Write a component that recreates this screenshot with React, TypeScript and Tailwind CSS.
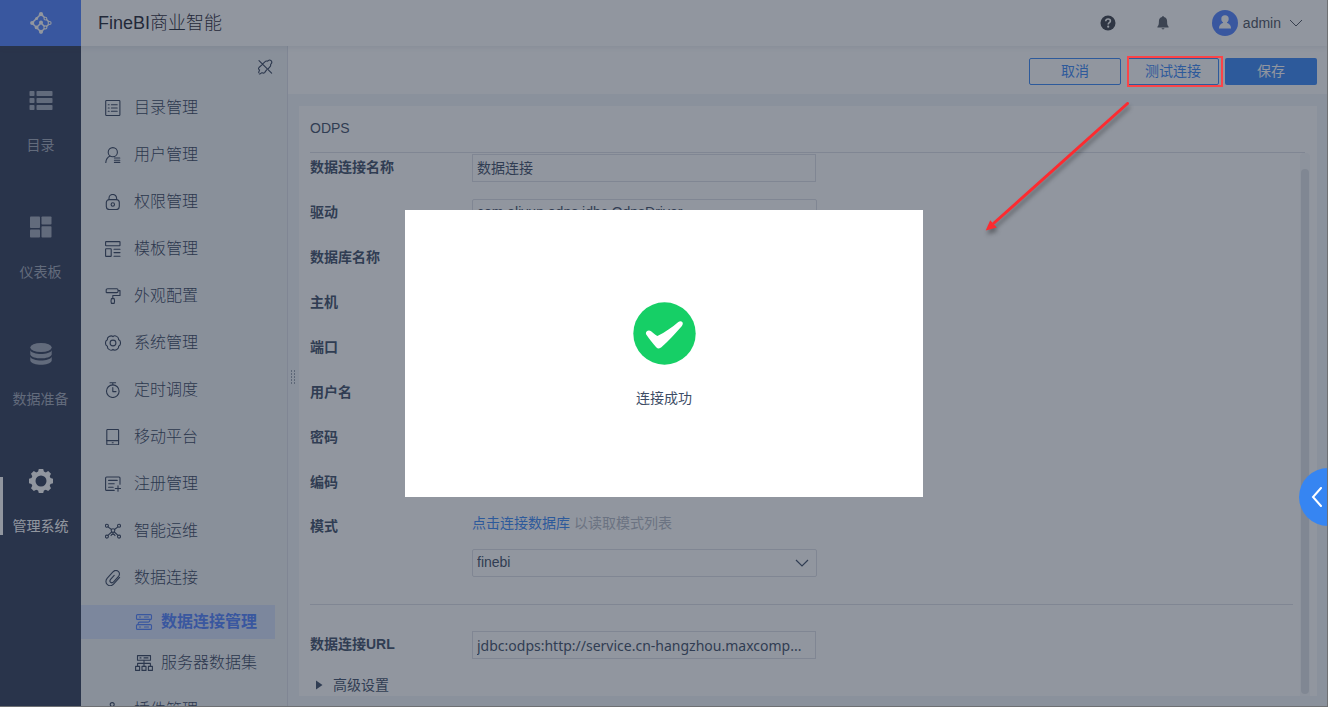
import type { ReactNode } from 'react';

const line = {
  viewBox: '0 0 16 16',
  fill: 'none',
  stroke: 'currentColor',
  strokeWidth: 1.1,
  strokeLinecap: 'round' as const,
  strokeLinejoin: 'round' as const,
  className: 'w-4 h-4 shrink-0',
  'aria-hidden': true,
};

const icons: Record<string, ReactNode> = {
  catalog: (
    <svg {...line}>
      <rect x="0.7" y="0.5" width="14.2" height="15" rx="0.8" />
      <path d="M3.2 4.7h1M6.4 4.7h5.8M3.2 8h1M6.4 8h5.8M3.2 11.3h1M6.4 11.3h5.8" />
    </svg>
  ),
  user: (
    <svg {...line}>
      <circle cx="7.8" cy="5.2" r="4.6" />
      <path d="M5 9C2.5 10.2 1 12.4.8 15.6M9.4 11h5.4M9.4 13.2h5.4M9.4 15.4h5.4" />
    </svg>
  ),
  lock: (
    <svg {...line}>
      <rect x="1.3" y="5.6" width="13" height="10" rx="3" />
      <path d="M4 5.4V4.2a3.8 3.8 0 0 1 7.6 0v1.2" />
      <circle cx="7.8" cy="10.5" r="1.7" />
    </svg>
  ),
  template: (
    <svg {...line}>
      <rect x="0.6" y="0.6" width="14.4" height="4.2" rx="0.5" />
      <rect x="0.6" y="7.8" width="5.6" height="7.6" rx="0.5" />
      <path d="M9 8.2h6M9 11.6h6M9 15.2h6" />
    </svg>
  ),
  roller: (
    <svg {...line}>
      <path d="M2.6.8h9.2c.8 0 1.2.5 1.2 1.2v1.4c0 .7-.4 1.2-1.2 1.2H2.6c-.8 0-1.4.3-1.4-1M1.2 4.2V2c0-.7.5-1.2 1.4-1.2M13 2.6h2v4.9H7.8v3" />
      <path d="M6.4 10.6h2.8c.5 1.5.5 3.2 0 4.8H6.4c-.5-1.6-.5-3.3 0-4.8Z" />
    </svg>
  ),
  setting: (
    <svg {...line}>
      <path d="M8 1.6C9.8-.5 14.2 2 13.5 4.8C16.200 5.300 16.200 10.500 13.500 11.200C14.400 13.900 10 16.300 8 14.400C6.200 16.500 1.800 14 2.500 11.200C-.2 10.700-.2 5.500 2.500 4.800C1.600 2.100 6-.3 8 1.6Z" />
      <circle cx="8" cy="8" r="2.9" />
    </svg>
  ),
  clock: (
    <svg {...line}>
      <circle cx="7.8" cy="9.2" r="6.3" />
      <path d="M5 .8h5.6M7.8.8v2M7.8 5.6v4h3.2" />
    </svg>
  ),
  mobile: (
    <svg {...line}>
      <rect x="1.8" y="0.5" width="11.8" height="15.2" rx="0.8" />
      <path d="M1.8 11.6h11.8M7.2 13.7h1" />
    </svg>
  ),
  register: (
    <svg {...line}>
      <path d="M15 8.3V2c0-.6-.4-1-1-1H1.6c-.6 0-1 .4-1 1v11.4c0 .6.4 1 1 1h7.6M3.6 4.4h8.6M3.6 7.8h5.6M3.6 11.2h4.6M13 9.8v5.4M10.3 12.5h5.4" />
    </svg>
  ),
  ops: (
    <svg {...line}>
      <circle cx="1.9" cy="2.8" r="1.5" />
      <circle cx="14" cy="2.8" r="1.5" />
      <circle cx="1.9" cy="13.6" r="1.5" />
      <circle cx="14" cy="13.6" r="1.5" />
      <circle cx="8" cy="7.6" r="1.8" />
      <path d="M3 3.9 6.5 6.5M12.9 3.9 9.5 6.5M2.9 12.4 6.7 9M13 12.4 9.3 9M8 9.6v1.6" />
      <path d="M6 12.6a2.1 2.1 0 0 1 4 0" />
    </svg>
  ),
  clip: (
    <svg {...line}>
      <path d="M14.6 7.3 9 13.6c-2 2.2-4.7 2.6-6.6 1-2-1.7-1.9-4.4-.1-6.5l5.4-6c1.6-1.8 4-2.1 5.6-.7s1.5 3.5 0 5.2l-4.7 5.3c-.9 1-2.1 1.1-3 .4-.9-.8-.8-2 0-3l3.6-4" />
    </svg>
  ),
  plugin: (
    <svg {...line}>
      <circle cx="7.2" cy="2.6" r="2" />
      <path d="M1 5h13v10H1z" />
    </svg>
  ),
};

const menu = [
  { icon: 'catalog', text: '目录管理' },
  { icon: 'user', text: '用户管理' },
  { icon: 'lock', text: '权限管理' },
  { icon: 'template', text: '模板管理' },
  { icon: 'roller', text: '外观配置' },
  { icon: 'setting', text: '系统管理' },
  { icon: 'clock', text: '定时调度' },
  { icon: 'mobile', text: '移动平台' },
  { icon: 'register', text: '注册管理' },
  { icon: 'ops', text: '智能运维' },
  { icon: 'clip', text: '数据连接' },
];

const mainNav = [
  {
    text: '目录',
    icon: (
      <svg viewBox="0 0 24 24" className="w-6 h-6" fill="currentColor" aria-hidden="true">
        <rect x="0.5" y="3" width="5" height="5" rx="0.8" />
        <rect x="7.5" y="3" width="16" height="5" rx="0.8" />
        <rect x="0.5" y="10" width="5" height="5" rx="0.8" />
        <rect x="7.5" y="10" width="16" height="5" rx="0.8" />
        <rect x="0.5" y="17" width="5" height="5" rx="0.8" />
        <rect x="7.5" y="17" width="16" height="5" rx="0.8" />
      </svg>
    ),
  },
  {
    text: '仪表板',
    icon: (
      <svg viewBox="0 0 24 24" className="w-6 h-6" fill="currentColor" aria-hidden="true">
        <rect x="1" y="1.5" width="10" height="11.5" rx="0.8" />
        <rect x="12.5" y="1.5" width="10" height="8" rx="0.8" />
        <rect x="1" y="14.5" width="10" height="8" rx="0.8" />
        <rect x="12.5" y="11.2" width="10" height="11.3" rx="0.8" />
      </svg>
    ),
  },
  {
    text: '数据准备',
    icon: (
      <svg viewBox="0 0 24 24" className="w-6 h-6" fill="currentColor" aria-hidden="true">
        <ellipse cx="12" cy="5.5" rx="10.7" ry="4.6" />
        <path d="M1.3 8.2c2 5 19.4 5 21.4 0v4.2c-2 5.2-19.4 5.2-21.4 0z" />
        <path d="M1.3 14.8c2 5 19.4 5 21.4 0v4c-2 5.4-19.4 5.4-21.4 0z" />
      </svg>
    ),
  },
  {
    text: '管理系统',
    active: true,
    icon: (
      <svg viewBox="0 0 24 24" className="w-6 h-6" fill="currentColor" fillRule="evenodd" aria-hidden="true">
        <path d="M9.8 0h4.4l.7 2.6 1.9.8L19.2 2 22 4.8l-1.3 2.4.8 1.9 2.5.7v4.4l-2.5.7-.8 1.9 1.3 2.4-2.8 2.8-2.4-1.3-1.9.8-.7 2.5H9.8l-.7-2.5-1.9-.8L4.8 22 2 19.2l1.3-2.4-.8-1.9L0 14.2V9.8l2.5-.7.8-1.9L2 4.8 4.8 2l2.4 1.4 1.9-.8zM12 6.5a5.5 5.5 0 1 0 0 11 5.5 5.5 0 0 0 0-11z" />
      </svg>
    ),
  },
];

const otherFields = [
  { id: 'database', label: '数据库名称', value: '' },
  { id: 'host', label: '主机', value: '' },
  { id: 'port', label: '端口', value: '' },
  { id: 'username', label: '用户名', value: '' },
  { id: 'password', label: '密码', value: '' },
  { id: 'charset', label: '编码', value: '' },
];

function Field({ id, label, value, wide }: { id: string; label: string; value: string; wide?: boolean }) {
  return (
    <div className="flex items-start">
      <label htmlFor={id} className="w-[162px] shrink-0 font-bold leading-[26px]">
        {label}
      </label>
      <input
        id={id}
        defaultValue={value}
        className={`h-7 border border-[#dcdfe6] px-1 pb-[2px] bg-transparent ${wide ? 'w-[345px] rounded-xs' : 'w-[344px]'}`}
      />
    </div>
  );
}

function Header() {
  return (
    <header className="relative z-10 flex h-[46px] shrink-0 bg-white shadow-[0_1px_6px_rgba(60,75,110,0.12)]">
      <a href="#home" aria-label="FineBI" className="flex w-[81px] items-center justify-center bg-[#4f80ff] text-white">
        <svg viewBox="0 0 22 22" className="w-[22px] h-[22px]" fill="none" stroke="currentColor" strokeWidth="1.5" aria-hidden="true">
          <path d="M11 2 2 11l9 9M11 2l9 9-4.5 4.5M11 20l4-4M6.5 15.5 11 11l4.5 4.5" />
          <g fill="currentColor" stroke="none">
            <circle cx="11" cy="2.2" r="2.1" />
            <circle cx="2.2" cy="11" r="2.1" />
            <circle cx="11" cy="19.8" r="2.1" />
            <circle cx="11" cy="10.5" r="2" />
            <circle cx="6.6" cy="6.6" r="1.5" />
            <circle cx="6.6" cy="15.4" r="1.9" />
          </g>
          <g fill="#4f80ff" strokeWidth="1.1">
            <circle cx="15.4" cy="6.6" r="1.4" />
            <circle cx="19.6" cy="11" r="1.5" />
            <circle cx="15.4" cy="15.4" r="1.5" />
          </g>
        </svg>
      </a>
      <div className="flex flex-1 items-center pl-[17px] pr-[25px]">
        <h1 className="flex-1 text-lg font-light text-[#1f2533]">FineBI商业智能</h1>
        <button aria-label="帮助" className="mr-10 text-[#3b3f48]">
          <svg viewBox="0 0 16 16" className="w-4 h-4" aria-hidden="true">
            <circle cx="8" cy="8" r="7.5" fill="currentColor" />
            <path d="M5.7 6.2c.1-1.4 1-2.2 2.4-2.2s2.3.8 2.3 2c0 1.7-2.2 1.7-2.2 3.4" fill="none" stroke="white" strokeWidth="1.6" />
            <circle cx="8.2" cy="11.7" r="1.1" fill="white" />
          </svg>
        </button>
        <button aria-label="消息" className="mr-[42px] text-[#555a65]">
          <svg viewBox="0 0 14 16" className="w-[14px] h-4" fill="currentColor" aria-hidden="true">
            <path d="M7 1c.6 0 .9.4.9.9 2.2.5 3.2 2.2 3.2 4.400 0 2.900.3 4.400 1.500 5.500v.6H1.400v-.6c1.200-1.100 1.500-2.600 1.500-5.500 0-2.200 1-3.900 3.200-4.400 0-.5.300-.9.900-.9z" />
            <path d="M5.5 13.3h3c-.2.7-.8 1.1-1.5 1.1s-1.3-.4-1.5-1.1z" />
          </svg>
        </button>
        <button className="flex items-center text-sm text-[#4a505c]">
          <svg viewBox="0 0 26 26" className="mr-[5px] w-[26px] h-[26px]" aria-hidden="true">
            <circle cx="13" cy="13" r="13" fill="#4f80ff" />
            <circle cx="13" cy="8.9" r="3.7" fill="white" />
            <path d="M7 18.5c0-3 1.5-4.7 3.8-5.5h4.4c2.3.8 3.8 2.5 3.8 5.5z" fill="white" />
            <path d="M11 11h4v4h-4z" fill="white" />
          </svg>
          admin
          <svg viewBox="0 0 14 8" className="ml-2 w-[14px] h-2" fill="none" stroke="currentColor" aria-hidden="true">
            <path d="M1 1l6 6 6-6" />
          </svg>
        </button>
      </div>
    </header>
  );
}

function MainNav() {
  return (
    <nav aria-label="主导航" className="flex w-[81px] shrink-0 flex-col bg-[#2f3a56] pt-[42px] text-sm">
      {mainNav.map((item) => (
        <a
          key={item.text}
          href="#nav"
          className={`relative flex h-[127px] shrink-0 flex-col items-center ${item.active ? 'text-white' : 'text-[#a1a8b8]'}`}
        >
          {item.active && <span className="absolute left-0 top-2 h-[58px] w-[3px] bg-white" />}
          {item.icon}
          <span className="mt-[23px] leading-5">{item.text}</span>
        </a>
      ))}
    </nav>
  );
}

function SideMenu() {
  return (
    <aside className="w-[207px] shrink-0 overflow-hidden border-r border-[#dcdfe8] bg-[#eff2f5] text-base font-light text-[#33415a]">
      <div className="flex h-[38px] items-center justify-end pr-[14px] pt-1">
        <button aria-label="取消固定">
          <svg {...line}>
            <path d="M2 1.6 14.6 14.2M6 4.600 8.700 2.200c1.500-.5 1.800.5 2.500-.6 1-.8 2-.7 2.900.1.900.9.900 2 .1 3-1.200.9-.2 1.200-.7 2.400L11.100 9.900M4.900 5.900 2 8.500c-.8.9-.6 1.800.6 2.400-.2 1-1.200 1.800-.8 2.900M9.600 10.900 7.600 13.600c-.9.900-1.600.8-2.600 0-.8.6-1.600 1.400-2.600 1.400" />
          </svg>
        </button>
      </div>
      <ul>
        {menu.map((item) => (
          <li key={item.text}>
            <a href="#menu" className="flex h-[47px] items-center gap-[13px] pl-6">
              {icons[item.icon]}
              {item.text}
            </a>
          </li>
        ))}
        <li className="pt-1">
          <a href="#connections" className="mr-3 flex h-[34px] items-center gap-2 bg-[#d5e0fa] pl-[54px] font-bold text-[#4f80ff]">
            <svg {...line} className="w-[18px] h-4 shrink-0" viewBox="0 0 18 16">
              <rect x="1.5" y="0.6" width="15" height="4.8" rx="1" />
              <rect x="1.5" y="10.6" width="15" height="4.8" rx="1" />
              <path d="M4.5 3h1M9.5 3h4M4.5 13h1M9.5 13h4M14.8 5.4v1.2c0 1-.5 1.5-1.5 1.5H4.7c-1 0-1.5.5-1.5 1.3v1.2" />
            </svg>
            数据连接管理
          </a>
        </li>
        <li>
          <a href="#datasets" className="flex h-[47px] items-center gap-2 pl-[54px]">
            <svg {...line} className="w-[18px] h-4 shrink-0" viewBox="0 0 18 16">
              <rect x="2.5" y="0.6" width="13" height="4.6" />
              <path d="M5 2.9h1M9 2.9h4M9 5.2v6M2.6 11.2V8.4h12.8v2.8" />
              <rect x="0.6" y="11.4" width="4" height="4" />
              <rect x="7" y="11.4" width="4" height="4" />
              <rect x="13.4" y="11.4" width="4" height="4" />
            </svg>
            服务器数据集
          </a>
        </li>
        <li>
          <a href="#plugins" className="flex h-[47px] items-center gap-[13px] pl-6">
            {icons.plugin}
            插件管理
          </a>
        </li>
      </ul>
    </aside>
  );
}

function ConnectionForm() {
  return (
    <form className="flex min-h-0 flex-1 flex-col overflow-hidden bg-white pl-[11px] text-sm text-[#3d4d66]">
      <h2 className="mr-3 h-[47px] shrink-0 border-b border-[#dcdfe6] leading-[45px]">ODPS</h2>
      <div className="flex min-h-0 flex-1">
        <div className="min-w-0 flex-1 pr-[7px] pt-px">
          <div className="flex flex-col gap-[17px]">
            <Field id="name" label="数据连接名称" value="数据连接" />
            <Field id="driver" label="驱动" value="com.aliyun.odps.jdbc.OdpsDriver" wide />
            {otherFields.map((f) => (
              <Field key={f.id} {...f} />
            ))}
            <div className="flex items-start">
              <label htmlFor="schema" className="w-[162px] shrink-0 font-bold leading-6">
                模式
              </label>
              <div>
                <p className="leading-[18px] text-[#b3b8c4]">
                  <a href="#connect" className="mr-1 text-[#3786f6]">点击连接数据库</a>
                  以读取模式列表
                </p>
                <div className="relative mt-[17px] w-[345px]">
                  <select id="schema" className="h-7 w-full appearance-none rounded-xs border border-[#dcdfe6] px-1 pb-[2px]">
                    <option>finebi</option>
                  </select>
                  <svg viewBox="0 0 14 8" className="pointer-events-none absolute right-2 top-[10px] w-[14px] h-2" fill="none" stroke="currentColor" strokeWidth="1.2" aria-hidden="true">
                    <path d="M1 1l6 6 6-6" />
                  </svg>
                </div>
              </div>
            </div>
          </div>
          <hr className="mb-[26px] mt-[27px] border-[#dcdfe6]" />
          <div className="flex items-start">
            <label htmlFor="url" className="w-[162px] shrink-0 font-bold leading-[26px]">
              数据连接URL
            </label>
            <input
              id="url"
              defaultValue="jdbc:odps:http://service.cn-hangzhou.maxcomp..."
              className="h-7 w-[344px] border border-[#dcdfe6] px-1 font-['Noto_Sans','Open_Sans',sans-serif]"
            />
          </div>
          <button type="button" className="mt-4 flex items-center gap-[10px] pl-[6px] leading-5">
            <svg viewBox="0 0 7 10" className="w-[7px] h-[10px]" fill="currentColor" aria-hidden="true">
              <path d="M0 .5 6.5 5 0 9.5z" />
            </svg>
            高级设置
          </button>
        </div>
        <div className="mr-[7px] w-[10px] rounded-t-sm bg-[#f7f8fa] px-px pb-[2px] pt-4">
          <div className="h-full rounded-full bg-[#dce1e6]" />
        </div>
      </div>
    </form>
  );
}

function SuccessDialog() {
  return (
    <div className="fixed inset-0 z-20 flex items-center justify-center bg-[rgba(35,46,64,0.5)]">
      <div
        role="dialog"
        aria-modal="true"
        aria-labelledby="result"
        className="flex h-[287px] w-[518px] flex-col items-center bg-white pt-[92px] text-sm text-[#3d4d66]"
      >
        <svg viewBox="0 0 64 64" className="w-16 h-16" aria-hidden="true">
          <circle cx="32.5" cy="31.5" r="31.2" fill="#16cf66" />
          <path
            d="M14.6 29.5c1.200-1.400 3.200-1.400 4.500-.2 2 1.900 3.900 3.500 6.300 4.600 8-3.700 14.500-8.600 20.900-13.900 1.500-1.200 3.100-1.100 4 .1.800 1.200.7 2.500-.4 3.800-6.500 7.500-13.200 14.500-20.500 21.400-1.700 1.600-3.800 1.500-5.200-.1-3.500-4-6.600-7.700-9.600-12.100-.9-1.300-.9-2.600 0-3.600z"
            fill="white"
          />
        </svg>
        <p id="result" className="mt-[22px] leading-5">连接成功</p>
      </div>
    </div>
  );
}

function Annotations() {
  return (
    <div className="pointer-events-none fixed inset-0 z-30">
      <div className="absolute right-[105px] top-14 h-[31px] w-24 border-2 border-[#fb4448]" />
      <svg viewBox="0 0 160 150" className="absolute right-[188px] top-[95px] h-[150px] w-[160px] drop-shadow-[1px_4px_2px_rgba(0,0,0,0.35)]" aria-hidden="true">
        <path d="M147.5 8.5 14 128" stroke="#fd2b30" strokeWidth="3" strokeLinecap="round" />
        <path d="M7.500 134 10.500 127 15 132z" fill="#fd2b30" stroke="#fd2b30" strokeWidth="2" />
      </svg>
    </div>
  );
}

export default function App() {
  return (
    <div className="relative flex h-screen flex-col overflow-hidden font-['Liberation_Sans','Noto_Sans_CJK_SC',sans-serif]">
      <Header />
      <div className="flex min-h-0 flex-1">
        <MainNav />
        <SideMenu />
        <main className="relative flex min-w-0 flex-1 flex-col bg-[#f0f5f8]">
          <svg viewBox="0 0 6 15" className="absolute left-[2px] top-1/2 h-[15px] w-[6px] -translate-y-1/2" fill="#3d4d66" aria-hidden="true">
            {[0, 3, 6, 9, 12].map((y) => (
              <g key={y}>
                <rect x="1" y={y + 1} width="1" height="1" />
                <rect x="4" y={y + 1} width="1" height="1" />
              </g>
            ))}
          </svg>
          <div className="flex h-12 shrink-0 items-center justify-end gap-[6px] bg-white pr-[11px] pt-[3px] text-sm text-[#3786f6]">
            <button className="h-[27px] w-[92px] rounded-xs border border-[#3786f6] pb-px">取消</button>
            <button className="h-[27px] w-[92px] rounded-xs border border-[#3786f6] pb-px">测试连接</button>
            <button className="h-[27px] w-[92px] rounded-xs bg-[#3786f6] pb-px text-white">保存</button>
          </div>
          <div className="flex min-h-0 flex-1 flex-col pb-[11px] pl-[11px] pr-[11px] pt-3">
            <ConnectionForm />
          </div>
        </main>
      </div>
      <SuccessDialog />
      <Annotations />
      <button aria-label="展开" className="absolute right-0 top-[468px] z-30 flex h-[58px] w-[29px] items-center rounded-l-full bg-[#3685f2] pl-3 text-white">
        <svg viewBox="0 0 12 20" className="h-5 w-3" fill="none" stroke="currentColor" strokeWidth="2" strokeLinecap="round" aria-hidden="true">
          <path d="M10 1 2 10l8 9" />
        </svg>
      </button>
      <div className="pointer-events-none absolute inset-0 z-40 border-b border-r border-[#6e7073]" />
    </div>
  );
}
